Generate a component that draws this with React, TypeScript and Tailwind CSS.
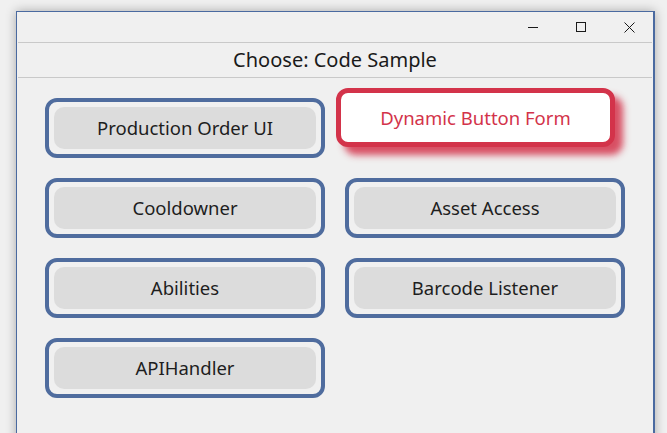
import React from 'react';

const samples = [
  'Production Order UI',
  'Dynamic Button Form',
  'Cooldowner',
  'Asset Access',
  'Abilities',
  'Barcode Listener',
  'APIHandler',
];

// 目前 hover 中的那一顆(畫面上浮起、紅框)
const ACTIVE = 'Dynamic Button Form';

function SampleButton({ label }: { label: string }) {
  if (label === ACTIVE) {
    return (
      <button
        type="button"
        className="w-[279px] h-[59px] -translate-x-[9px] -translate-y-[10px] rounded-[12px] border-[5px] border-[#d3334a] bg-white text-[#d3334a] text-[18.5px] shadow-[8px_8px_7px_rgba(211,51,74,0.85)]"
      >
        {label}
      </button>
    );
  }
  return (
    <button
      type="button"
      className="w-[280px] h-[60px] rounded-[12px] border-4 border-[#4f6c9e] bg-[#f0f0f0] p-[5px]"
    >
      <span className="flex h-full w-full items-center justify-center rounded-[10px] bg-[#dcdcdc] text-[18.5px] text-[#1e1e1e]">
        {label}
      </span>
    </button>
  );
}

export default function App() {
  return (
    <div
      className="w-[667px] h-[433px] overflow-hidden bg-[#f0f0f0] pt-[11px] pl-4"
      style={{ fontFamily: '"Noto Sans", "Open Sans", sans-serif' }}
    >
      <div className="w-[639px] h-[440px] border border-r-2 border-[#4a6aa0] bg-[#f0f0f0] shadow-[0_0_10px_rgba(0,0,0,0.3)] flex flex-col">
        {/* 標題列:只有右上角三顆按鈕 */}
        <div className="h-[30px] flex justify-end items-center text-[#1a1a1a]">
          <div className="w-12 h-full flex items-center justify-center">
            <svg width="10" height="10" viewBox="0 0 10 10">
              <line x1="0" y1="5.5" x2="10" y2="5.5" stroke="currentColor" strokeWidth="1" />
            </svg>
          </div>
          <div className="w-12 h-full flex items-center justify-center">
            <svg width="10" height="10" viewBox="0 0 10 10">
              <rect x="0.5" y="0.5" width="9" height="9" fill="none" stroke="currentColor" strokeWidth="1" />
            </svg>
          </div>
          <div className="w-12 h-full flex items-center justify-center">
            <svg width="11" height="11" viewBox="0 0 11 11">
              <path d="M0.5 0.5 L10.5 10.5 M10.5 0.5 L0.5 10.5" stroke="currentColor" strokeWidth="1" />
            </svg>
          </div>
        </div>

        <div className="h-[36px] mx-px border-y border-[#c9c9c9] flex items-center justify-center text-[20px] text-[#1a1a1a]">
          Choose: Code Sample
        </div>

        <div className="grid grid-cols-[280px_280px] gap-x-5 gap-y-5 pl-7 pt-5">
          {samples.map((s) => (
            <SampleButton key={s} label={s} />
          ))}
        </div>
      </div>
    </div>
  );
}
